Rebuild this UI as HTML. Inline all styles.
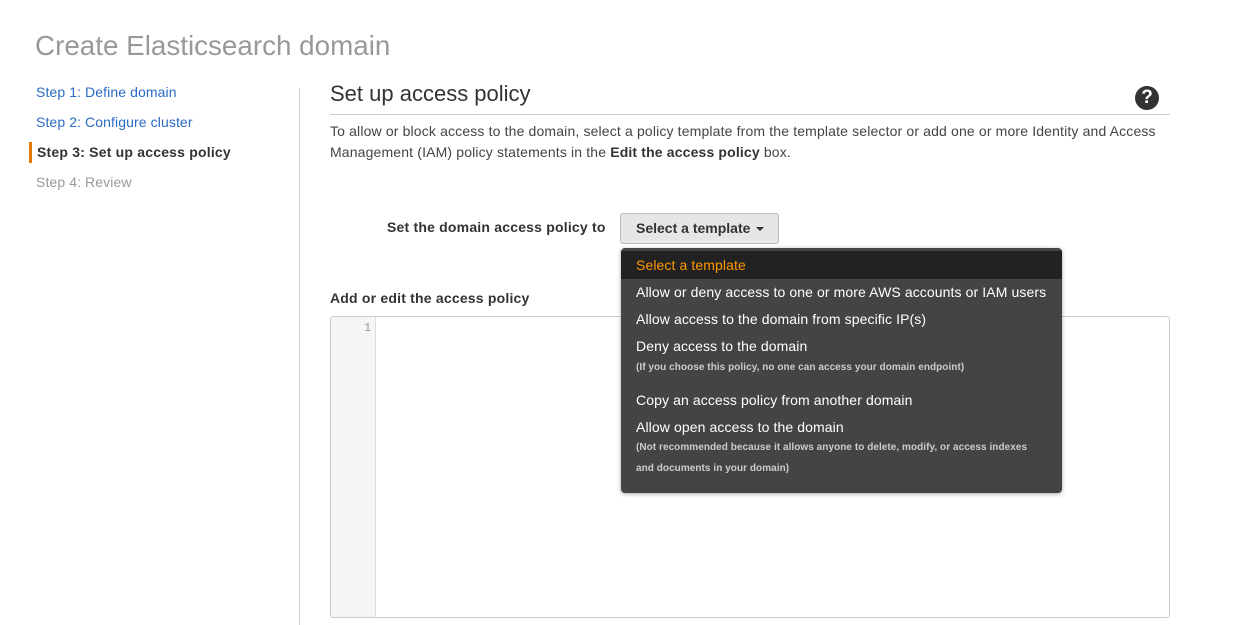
<!DOCTYPE html>
<html><head><meta charset="utf-8"><style>
*{margin:0;padding:0;box-sizing:border-box}
body{width:1234px;height:625px;background:#fff;font-family:"Liberation Sans",Arial,sans-serif;color:#444;position:relative;overflow:hidden}
.a{position:absolute;white-space:nowrap}
h1{position:absolute;left:35px;top:30px;font-size:27.8px;font-weight:normal;color:#999}
.s{font-size:14px;left:36px;letter-spacing:0.1px}
.blue{color:#2a6bc4}
.dd div{position:absolute;left:15px;white-space:nowrap;color:#fff;font-size:14px;letter-spacing:0.1px}
.dd .sm{font-size:10px;font-weight:bold;color:#ccc;letter-spacing:0.05px}
</style></head><body>
<h1>Create Elasticsearch domain</h1>
<div class="a s blue" style="top:84px">Step 1: Define domain</div>
<div class="a s blue" style="top:114px">Step 2: Configure cluster</div>
<div style="position:absolute;left:29px;top:142px;width:3px;height:21px;background:#e07b00"></div>
<div class="a s" style="top:144px;left:37px;font-weight:bold;color:#333;letter-spacing:0.2px">Step 3: Set up access policy</div>
<div class="a s" style="top:174px;color:#999">Step 4: Review</div>
<div style="position:absolute;left:299px;top:88px;width:1px;height:537px;background:#ccc"></div>

<div class="a" style="left:330px;top:81px;font-size:22px;color:#333">Set up access policy</div>
<div style="position:absolute;left:330px;top:114px;width:840px;height:1px;background:#ccc"></div>
<div style="position:absolute;left:1135px;top:86px;width:24px;height:24px;border-radius:50%;background:#333;color:#fff;font-weight:bold;font-size:19px;text-align:center;line-height:24px">?</div>
<div class="a" style="left:330px;top:121px;font-size:14px;line-height:21px;color:#444;letter-spacing:0.15px">To allow or block access to the domain, select a policy template from the template selector or add one or more Identity and Access<br>Management (IAM) policy statements in the <b style="color:#333">Edit the access policy</b> box.</div>

<div class="a" style="left:387px;top:219px;font-size:14px;font-weight:bold;color:#333;letter-spacing:0.2px">Set the domain access policy to</div>
<div style="position:absolute;left:620px;top:213px;width:159px;height:31px;background:#e6e6e6;border:1px solid #bbb;border-radius:3px;font-size:14px;font-weight:bold;color:#333;line-height:29px;padding-left:15px">Select a template <span style="display:inline-block;width:0;height:0;border-left:4px solid transparent;border-right:4px solid transparent;border-top:4px solid #333;vertical-align:middle;margin-left:2px"></span></div>

<div class="a" style="left:330px;top:290px;font-size:14px;font-weight:bold;color:#333;letter-spacing:0.2px">Add or edit the access policy</div>
<div style="position:absolute;left:330px;top:316px;width:840px;height:302px;border:1px solid #ccc;border-radius:3px;overflow:hidden">
<div style="position:absolute;left:0;top:0;width:45px;height:100%;background:#f5f5f5;border-right:1px solid #ddd"></div>
<div class="a" style="left:33px;top:4px;font-size:12px;color:#999;font-family:'Liberation Mono',monospace">1</div>
</div>

<div class="dd" style="position:absolute;left:621px;top:248px;width:441px;height:245px;background:#444;border-radius:4px;box-shadow:0 1px 4px rgba(0,0,0,.35);overflow:hidden">
<div style="left:0;top:3px;width:441px;height:28px;background:#222"></div>
<div style="top:9px;color:#f90">Select a template</div>
<div style="top:36px">Allow or deny access to one or more AWS accounts or IAM users</div>
<div style="top:63px">Allow access to the domain from specific IP(s)</div>
<div style="top:90px">Deny access to the domain</div>
<div class="sm" style="top:114px">(If you choose this policy, no one can access your domain endpoint)</div>
<div style="top:144px">Copy an access policy from another domain</div>
<div style="top:171px">Allow open access to the domain</div>
<div class="sm" style="top:194px">(Not recommended because it allows anyone to delete, modify, or access indexes</div>
<div class="sm" style="top:215px">and documents in your domain)</div>
</div>
</body></html>
